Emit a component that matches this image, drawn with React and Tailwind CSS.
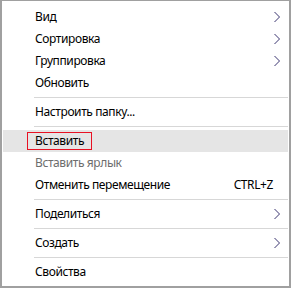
import { Fragment } from 'react';

const items = [
  { label: 'Вид', arrow: true },
  { label: 'Сортировка', arrow: true },
  { label: 'Группировка', arrow: true },
  { label: 'Обновить' },
  { sep: true },
  { label: 'Настроить папку...' },
  { sep: true },
  { label: 'Вставить', hover: true, boxed: true },
  { label: 'Вставить ярлык', disabled: true },
  { label: 'Отменить перемещение', shortcut: 'CTRL+Z' },
  { sep: true },
  { label: 'Поделиться', arrow: true },
  { sep: true },
  { label: 'Создать', arrow: true },
  { sep: true },
  { label: 'Свойства' },
];

function Chevron() {
  return (
    <svg width="8" height="12" viewBox="0 0 8 12" className="shrink-0">
      <path d="M1.5 1 L6.5 6 L1.5 11" fill="none" stroke="#3a3470" strokeWidth="1" />
    </svg>
  );
}

export default function App() {
  return (
    <div
      className="w-[291px] h-[288px] bg-white border-[#a0a0a0] border-t border-l-2 border-r-2 border-b-2 px-px pt-[5px] text-[12px] tracking-[-0.4px] text-black"
      style={{ fontFamily: '"Noto Sans", "Open Sans", sans-serif' }}
    >
      {items.map((it, i) =>
        it.sep ? (
          <div key={i} className="h-[7px] flex items-center pl-[31px]">
            <div className="h-px w-full bg-[#d7d7d7]" />
          </div>
        ) : (
          <div
            key={i}
            className={`h-[22px] flex items-center pl-[32px] pr-[7px] ${it.hover ? 'bg-[#e5e5e5]' : ''}`}
          >
            {it.boxed ? (
              <span className="-ml-[8px] px-[7px] h-[18px] flex items-center border border-[#e81123] leading-none">
                {it.label}
              </span>
            ) : (
              <span className={`leading-none ${it.disabled ? 'text-[#6d6d6d]' : ''}`}>{it.label}</span>
            )}
            <div className="flex-1" />
            {it.shortcut && <span className="leading-none mr-[8px]">{it.shortcut}</span>}
            {it.arrow && <Chevron />}
          </div>
        )
      )}
    </div>
  );
}
